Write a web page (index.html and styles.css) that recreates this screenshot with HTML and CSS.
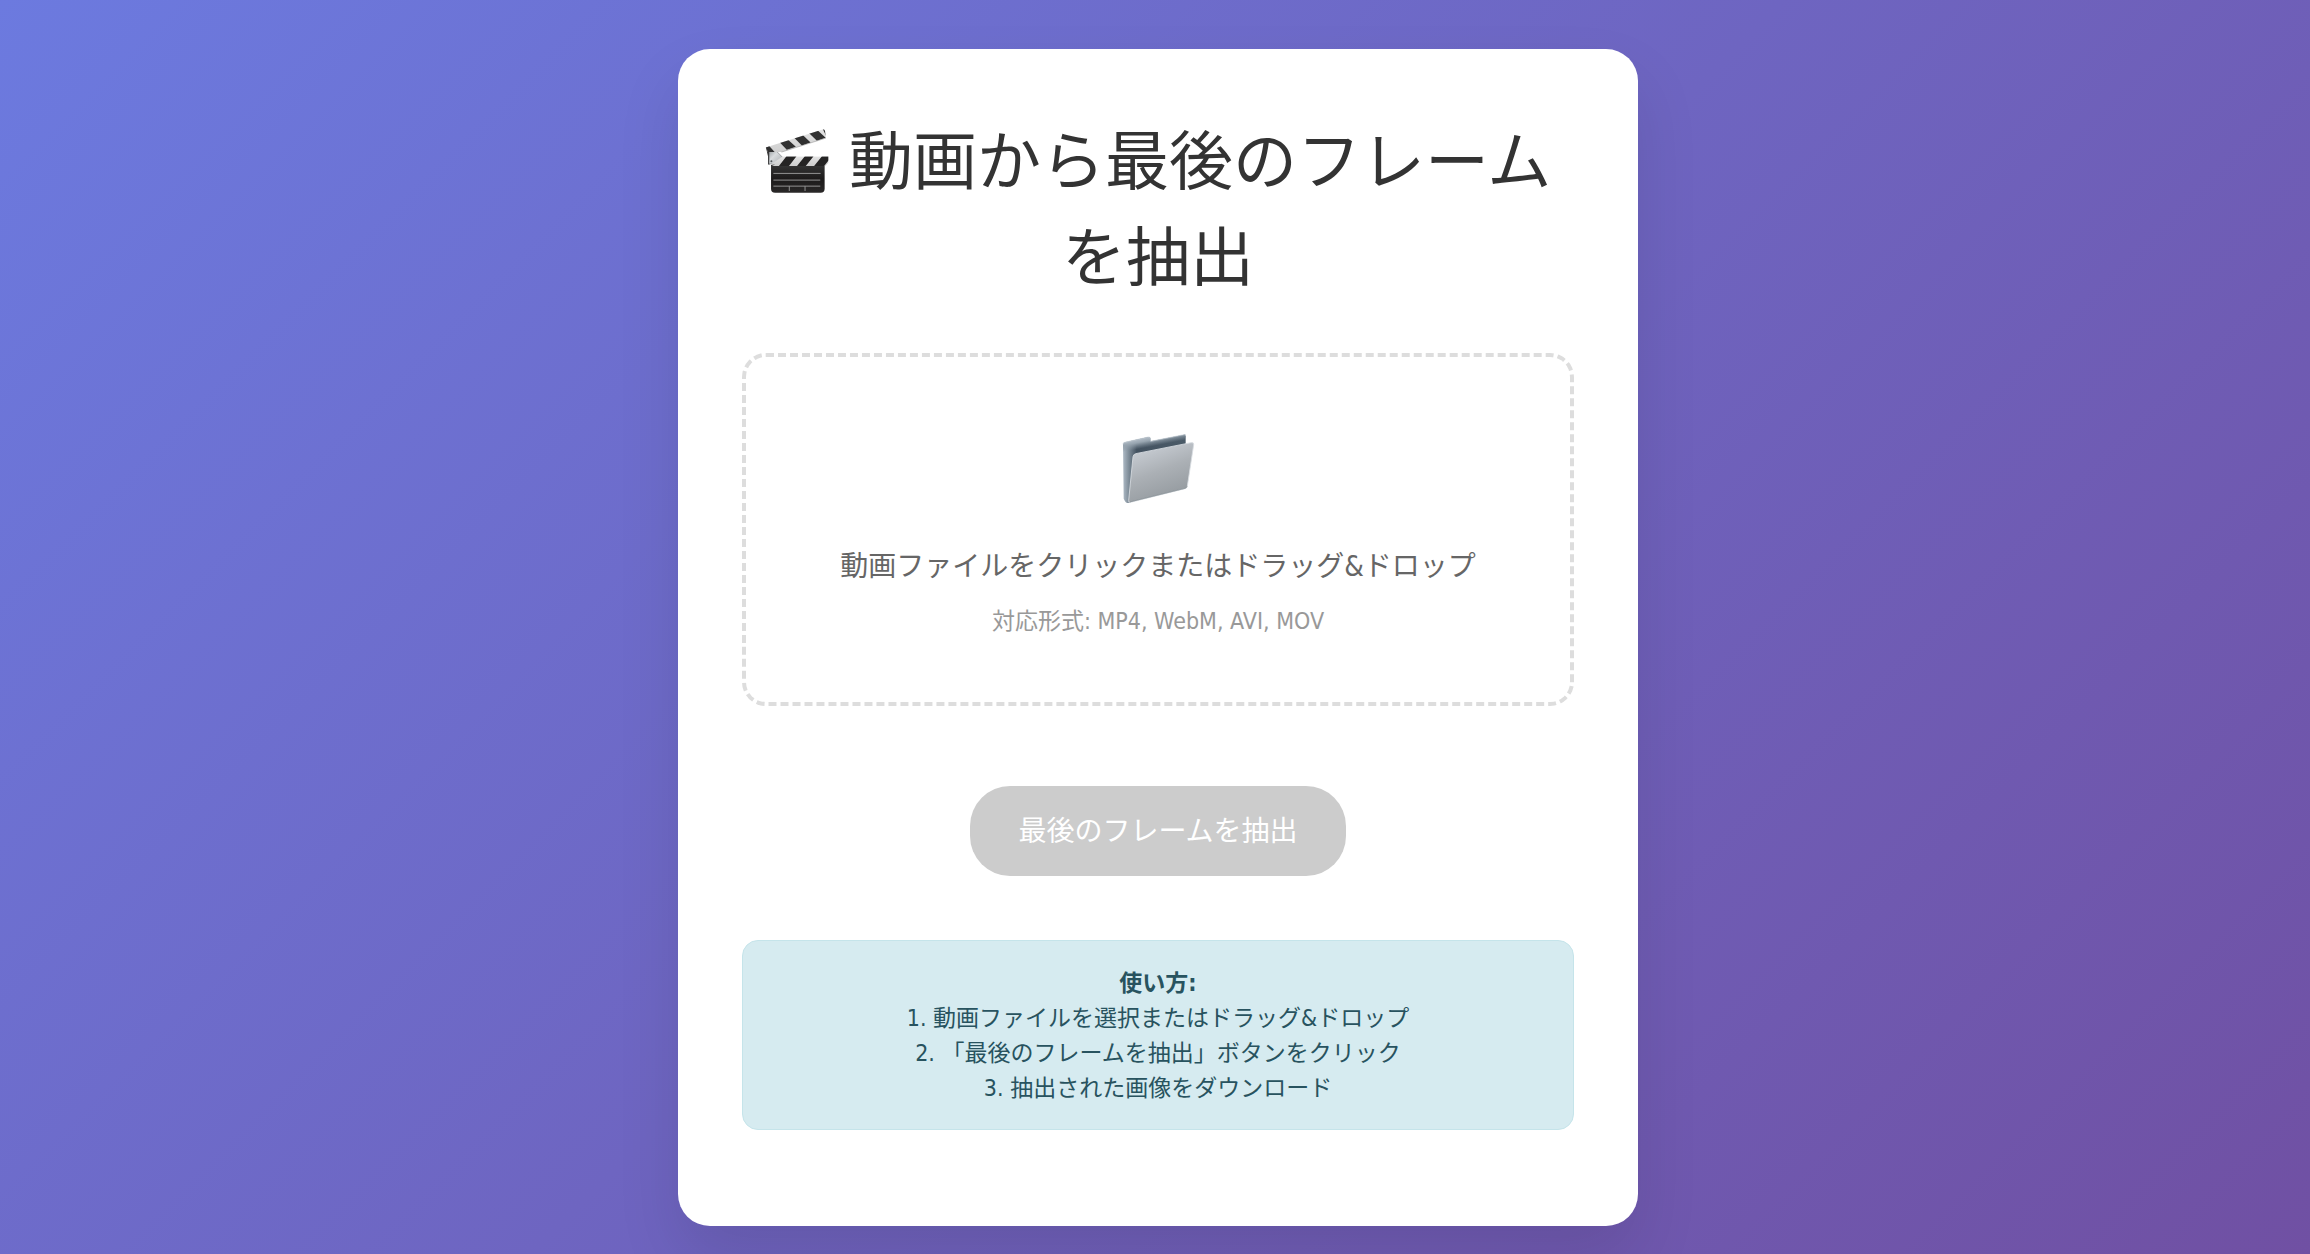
FILE: index.html
```
<!DOCTYPE html>
<html lang="ja">
<head>
    <meta charset="UTF-8">
    <meta name="viewport" content="width=device-width, initial-scale=1.0">
    <title>動画から最後のフレームを抽出</title>
    <link rel="stylesheet" href="styles.css">
</head>
<body>
    <main class="container">
        <h1>
            <svg class="title-icon" viewBox="32 28 191 191" aria-hidden="true">
                <defs>
                    <linearGradient id="board" x1="0" y1="0" x2="0" y2="1">
                        <stop offset="0" stop-color="#343434"/>
                        <stop offset="0.5" stop-color="#1c1a1a"/>
                        <stop offset="1" stop-color="#2a2828"/>
                    </linearGradient>
                    <linearGradient id="stripe" x1="0" y1="0" x2="0" y2="1">
                        <stop offset="0" stop-color="#e4e4e4"/>
                        <stop offset="1" stop-color="#cdcdcd"/>
                    </linearGradient>
                    <linearGradient id="hinge" x1="0" y1="0" x2="1" y2="1">
                        <stop offset="0" stop-color="#8f9497"/>
                        <stop offset="0.4" stop-color="#d9dcde"/>
                        <stop offset="1" stop-color="#a4a8ab"/>
                    </linearGradient>
                    <clipPath id="arm-clip"><path d="M34 83 206 29q4 0 5 5l3 21L81 97 41 97z"/></clipPath>
                    <clipPath id="bar-clip"><path d="M86 109H222V128L211 139H50V133z"/></clipPath>
                </defs>
                <path d="M35 84 46 89V134H41V109z" fill="#2b2b2b"/>
                <path d="M45 87 62 90 88 116 80 132 44 132z" fill="url(#hinge)" stroke="#7c8083" stroke-width="2"/>
                <g fill="#55595c"><circle cx="51" cy="94" r="3"/><circle cx="51" cy="124" r="3"/><circle cx="79" cy="122" r="3"/></g>
                <g clip-path="url(#arm-clip)">
                    <path d="M30 20H225V105H30z" fill="url(#stripe)"/>
                    <path d="M30 83 44 78 61 97H41zM75 67 100 59 124 81 97 90zM119 54 144 45 168 68 142 77zM163 40 188 31 213 54 187 63zM204 27 215 27 216 52z" fill="#303030"/>
                </g>
                <path d="M81 97 214 55" stroke="#8a8a8a" stroke-width="1.500"/>
                <path d="M50 136H210V206Q210 218 198 218H62Q50 218 50 206z" fill="url(#board)"/>
                <g clip-path="url(#bar-clip)">
                    <path d="M42 109H222V139H42z" fill="url(#stripe)"/>
                    <path d="M96 109H126L103 139H73zM151 109H177L153 139H127zM202 109H222V121L208 139H178z" fill="#252424"/>
                    <path d="M42 136 62 134 50 139z" fill="#252424"/>
                </g>
                <path d="M57 160.500H198M57 180.500H197M57 198.500H197M104.500 199V213M151.500 199V213" fill="none" stroke="#a9a9a9" stroke-width="2.500"/>
            </svg>
            動画から最後のフレームを抽出
        </h1>

        <label class="upload-area" for="video-input">
            <input type="file" id="video-input" class="file-input" accept="video/*">
            <svg class="upload-icon" viewBox="42 36 234 222" aria-hidden="true">
                <defs>
                    <linearGradient id="folder-side" x1="0" y1="0" x2="1" y2="0">
                        <stop offset="0" stop-color="#aebac5"/>
                        <stop offset="0.100" stop-color="#7b8995"/>
                        <stop offset="0.220" stop-color="#435260"/>
                        <stop offset="1" stop-color="#4b5b68"/>
                    </linearGradient>
                    <linearGradient id="folder-front" x1="0.200" y1="0" x2="0.600" y2="1">
                        <stop offset="0" stop-color="#cdd2d9"/>
                        <stop offset="0.500" stop-color="#abb0b5"/>
                        <stop offset="1" stop-color="#92989d"/>
                    </linearGradient>
                    <linearGradient id="folder-tab" gradientUnits="userSpaceOnUse" x1="90" y1="57" x2="96" y2="88">
                        <stop offset="0" stop-color="#b7c1cb"/>
                        <stop offset="0.400" stop-color="#98a5b0"/>
                        <stop offset="1" stop-color="#8795a1" stop-opacity="0"/>
                    </linearGradient>
                </defs>
                <path d="M54 73Q54 68 59 67L130 51Q135 50 136 55L137 64 237 44Q242 43 242 48V190L72 248Q64 252 60 244L56 236z" fill="url(#folder-side)"/>
                <path d="M54 73Q54 68 59 67L130 51Q135 50 136 55L137 64 237 44Q242 43 242 48V60L137 82 54 110z" fill="url(#folder-tab)"/>
                <path d="M54 73Q54 68 59 67L130 51Q135 50 136 55L137 64 237 44Q242 43 242 48" fill="none" stroke="#c5ced6" stroke-width="2"/>
                <path d="M84 110Q85 103 92 101L258 68Q267 66 266 74L247 199Q246 205 240 206L76 247Q70 248 71 241z" fill="url(#folder-front)" stroke="#d8dde2" stroke-width="2.500"/>
                <path d="M74 246 240 205Q245 204 246 199" fill="none" stroke="#818990" stroke-width="2"/>
            </svg>
            <span class="upload-text">動画ファイルをクリックまたはドラッグ&amp;ドロップ</span>
            <span class="upload-hint">対応形式: MP4, WebM, AVI, MOV</span>
        </label>

        <button type="button" class="extract-btn" disabled>最後のフレームを抽出</button>

        <div class="info">
            <strong>使い方:</strong><br>
            1. 動画ファイルを選択またはドラッグ&amp;ドロップ<br>
            2. 「最後のフレームを抽出」ボタンをクリック<br>
            3. 抽出された画像をダウンロード
        </div>
    </main>
</body>
</html>
```

FILE: styles.css
```
* {
    margin: 0;
    padding: 0;
    box-sizing: border-box;
}

body {
    font-family: 'DejaVu Sans Condensed', 'Noto Sans CJK JP', sans-serif;
    background: linear-gradient(135deg, #6c7adf 0%, #7050a3 100%);
    min-height: 100vh;
    padding: 49px 26px 27px 32px;
}

.container {
    max-width: 960px;
    margin: 0 auto;
    padding: 64px;
    background: #fff;
    border-radius: 32px;
    box-shadow: 0 32px 64px rgba(0, 0, 0, 0.1);
    text-align: center;
}

h1 {
    padding-top: 1px;
    margin-bottom: 47px;
    color: #333;
    font-size: 64px;
    font-weight: 400;
    line-height: 96px;
}

.title-icon {
    width: 64px;
    height: 64px;
    margin-right: 2px;
    vertical-align: -9px;
}

.upload-area {
    display: flex;
    flex-direction: column;
    align-items: center;
    margin-bottom: 80px;
    padding: 75px 64px 63px;
    border: 4px dashed #ddd;
    border-radius: 24px;
    cursor: pointer;
}

.file-input {
    position: absolute;
    opacity: 0;
    pointer-events: none;
}

.upload-icon {
    width: 78px;
    height: 74px;
    margin-bottom: 40px;
}

.upload-text {
    margin-bottom: 16px;
    color: #666;
    font-size: 28px;
    line-height: 42px;
}

.upload-hint {
    color: #999;
    font-size: 23px;
    line-height: 35px;
}

.extract-btn {
    padding: 25px 48px 23px;
    border: none;
    border-radius: 40px;
    background: #ccc;
    color: #fff;
    font-family: inherit;
    font-size: 28px;
    line-height: 42px;
    cursor: pointer;
}

.extract-btn:disabled {
    cursor: not-allowed;
}

.info {
    margin: 64px 0 32px;
    padding: 25px 24px 23px;
    border: 1px solid #c5e4ea;
    border-radius: 16px;
    background: #d6ebf0;
    color: #28535f;
    font-size: 23px;
    line-height: 35px;
}
```
